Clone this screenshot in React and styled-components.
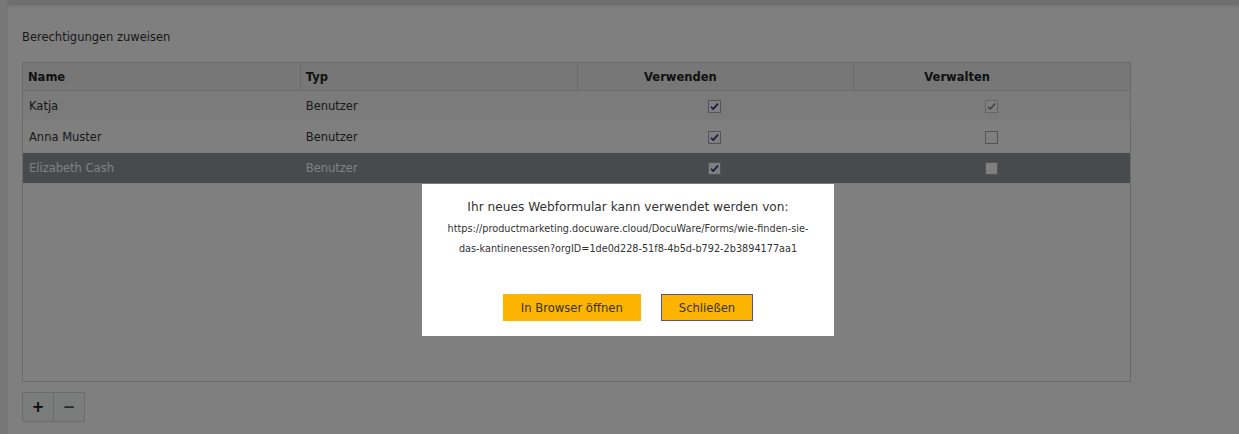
import React from 'react';
import styled, { createGlobalStyle } from 'styled-components';

const GlobalStyle = createGlobalStyle`
	html, body {
		margin: 0;
		padding: 0;
		background: #ffffff;
		font-family: "DejaVu Sans", Verdana, sans-serif;
		color: #333333;
	}
`;

const Page = styled.div`
	display: flex;
	height: 434px;
	width: 1239px;
	overflow: hidden;
`;
const SideStrip = styled.div`
	width: 8px;
	background: #eeeeee;
	flex-shrink: 0;
`;
const Main = styled.div`
	flex: 1;
	display: flex;
	flex-direction: column;
`;
const TopBar = styled.div`
	height: 5px;
	background: #dcdedd;
	box-shadow: 0 1px 3px rgba(0, 0, 0, 0.12);
`;
const Content = styled.div`
	padding: 25px 0 0 14px;
`;
const Title = styled.div`
	font-size: 11.5px;
	line-height: 14px;
	margin-bottom: 18px;
`;
const TableBox = styled.div`
	width: 1107px;
	height: 318px;
	border: 1px solid #d6d6d6;
	background: #ffffff;
`;
const HeaderRow = styled.div`
	display: grid;
	grid-template-columns: repeat(4, 1fr);
	height: 27px;
	background: #eceeed;
	border-bottom: 1px solid #d6d6d6;
`;
const HeadCell = styled.div`
	display: flex;
	align-items: center;
	justify-content: ${(p) => (p.$center ? 'center' : 'flex-start')};
	padding-left: ${(p) => (p.$center ? '0' : '5px')};
	padding-right: ${(p) => (p.$center ? '70px' : '0')};
	font-size: 11.5px;
	font-weight: bold;
	color: #222;
	border-left: ${(p) => (p.$first ? 'none' : '1px solid #d6d6d6')};
`;
const Row = styled.div`
	display: grid;
	grid-template-columns: repeat(4, 1fr);
	height: ${(p) => p.$h}px;
	background: ${(p) => (p.$selected ? '#90969c' : p.$alt ? '#f4f6f4' : '#ffffff')};
	color: ${(p) => (p.$selected ? '#ffffff' : '#333333')};
`;
const Cell = styled.div`
	display: flex;
	align-items: center;
	justify-content: ${(p) => (p.$center ? 'center' : 'flex-start')};
	padding-left: ${(p) => (p.$center ? '0' : '6px')};
	font-size: 11.5px;
`;
const ButtonBar = styled.div`
	display: flex;
	margin-top: 10px;
`;
const SmallButton = styled.div`
	width: 30px;
	height: 28px;
	border: 1px solid #d6d6d6;
	border-left: ${(p) => (p.$joined ? 'none' : '1px solid #d6d6d6')};
	background: #f6f8f8;
	display: flex;
	align-items: center;
	justify-content: center;
	font-size: 15px;
	font-weight: bold;
	color: ${(p) => (p.$dim ? '#555' : '#111')};
`;

const Overlay = styled.div`
	position: fixed;
	inset: 0;
	background: rgba(0, 0, 0, 0.5);
`;
const Dialog = styled.div`
	position: absolute;
	left: 422px;
	top: 184px;
	width: 412px;
	height: 152px;
	background: #ffffff;
	display: flex;
	flex-direction: column;
	align-items: center;
	box-sizing: border-box;
	padding-top: 15px;
`;
const DialogTitle = styled.div`
	font-size: 12.2px;
	line-height: 16px;
	color: #333;
`;
const Url = styled.div`
	margin-top: 4px;
	font-size: 9.7px;
	line-height: 20px;
	color: #333;
	text-align: center;
`;
const Actions = styled.div`
	display: flex;
	gap: 20px;
	margin-top: 35px;
`;
const DialogButton = styled.div`
	height: 27px;
	box-sizing: border-box;
	padding: 0 17px;
	background: #fdb400;
	border: 1px solid ${(p) => (p.$focus ? '#5a4f9b' : '#fdb400')};
	display: flex;
	align-items: center;
	font-size: 11.6px;
	color: #333;
`;

function CheckBox({ checked, disabled }) {
	return (
		<svg width="13" height="13" viewBox="0 0 13 13">
			<rect x="0.5" y="0.5" width="12" height="12" fill="#ffffff" stroke={disabled ? '#c8c8c8' : '#a8a8a8'} />
			{checked && (
				<path
					d="M3 6.8 L5.2 9 L10 3.6"
					fill="none"
					stroke={disabled ? '#8a8a8a' : '#2a2a8a'}
					strokeWidth="1.6"
				/>
			)}
		</svg>
	);
}

const rows = [
	{ name: 'Katja', use: true, manage: true, manageDisabled: true, alt: true, h: 30 },
	{ name: 'Anna Muster', use: true, manage: false, h: 32 },
	{ name: 'Elizabeth Cash', use: true, manage: false, selected: true, h: 30 },
];

export default function App() {
	return (
		<>
			<GlobalStyle />
			<Page>
				<SideStrip />
				<Main>
					<TopBar />
					<Content>
						<Title>Berechtigungen zuweisen</Title>
						<TableBox>
							<HeaderRow>
								<HeadCell $first>Name</HeadCell>
								<HeadCell>Typ</HeadCell>
								<HeadCell $center>Verwenden</HeadCell>
								<HeadCell $center>Verwalten</HeadCell>
							</HeaderRow>
							{rows.map((r) => (
								<Row key={r.name} $alt={r.alt} $selected={r.selected} $h={r.h}>
									<Cell>{r.name}</Cell>
									<Cell>Benutzer</Cell>
									<Cell $center>
										<CheckBox checked={r.use} />
									</Cell>
									<Cell $center>
										<CheckBox checked={r.manage} disabled={r.manageDisabled} />
									</Cell>
								</Row>
							))}
						</TableBox>
						<ButtonBar>
							<SmallButton>+</SmallButton>
							<SmallButton $joined $dim>−</SmallButton>
						</ButtonBar>
					</Content>
				</Main>
			</Page>
			<Overlay>
				<Dialog>
					<DialogTitle>Ihr neues Webformular kann verwendet werden von:</DialogTitle>
					<Url>
						https://productmarketing.docuware.cloud/DocuWare/Forms/wie-finden-sie-
						<br />
						das-kantinenessen?orgID=1de0d228-51f8-4b5d-b792-2b3894177aa1
					</Url>
					<Actions>
						<DialogButton>In Browser öffnen</DialogButton>
						<DialogButton $focus>Schließen</DialogButton>
					</Actions>
				</Dialog>
			</Overlay>
		</>
	);
}
